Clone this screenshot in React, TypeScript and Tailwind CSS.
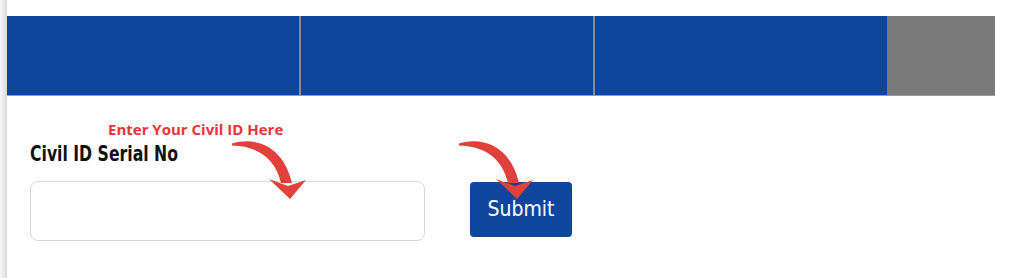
import React from "react";

function CurvedArrow({ className }: { className?: string }) {
  return (
    <svg className={className} width="80" height="66" viewBox="0 0 80 66" fill="none">
      <path d="M4 7.5 C 30 0, 56 12, 64 47 L 53 47 C 47 21, 28 10, 4 9.5 Z" fill="#e0413b" />
      <path d="M41 43 L 62 63 L 78 44 L 60 50 Z" fill="#e0413b" />
    </svg>
  );
}

export default function App() {
  return (
    <div className="flex w-[1024px] h-[278px] bg-white overflow-hidden">
      <div className="w-[7px] h-full bg-gradient-to-r from-[#f7f7f7] to-[#d9d9d9]" />
      <div className="flex-1 flex flex-col pt-[16px]">
        <div className="flex w-[988px] h-[80px] border-b border-[#9a9a9a]">
          <div className="w-[292px] bg-[#0e469e]" />
          <div className="w-[2px] bg-[#8a8a8a]" />
          <div className="w-[292px] bg-[#0e469e]" />
          <div className="w-[2px] bg-[#8a8a8a]" />
          <div className="w-[292px] bg-[#0e469e]" />
          <div className="flex-1 bg-[#7a7a7a]" />
        </div>
        <div className="relative pl-[23px] pt-[48px]">
          <div
            className="absolute left-[101px] top-[26px] text-[15px] font-bold text-[#ec3437] leading-none"
            style={{ fontFamily: '"Open Sans", sans-serif' }}
          >
            Enter Your Civil ID Here
          </div>
          <CurvedArrow className="absolute left-[221px] top-[40px] z-10" />
          <CurvedArrow className="absolute left-[448px] top-[40px] z-10" />
          <div
            className="block w-max origin-left scale-x-[0.83] text-[21px] font-bold text-[#111] leading-none"
            style={{ fontFamily: '"DejaVu Sans Condensed", sans-serif' }}
          >
            Civil ID Serial No
          </div>
          <div className="flex items-start gap-[45px] mt-[16px]">
            <div className="w-[395px] h-[60px] rounded-[8px] border border-[#d8d8d8] bg-white" />
            <div
              className="w-[102px] h-[55px] mt-[1px] rounded-[4px] bg-[#0e469e] text-white text-[21px] flex items-center justify-center"
              style={{ fontFamily: '"DejaVu Sans Condensed", sans-serif' }}
            >
              Submit
            </div>
          </div>
        </div>
      </div>
    </div>
  );
}
